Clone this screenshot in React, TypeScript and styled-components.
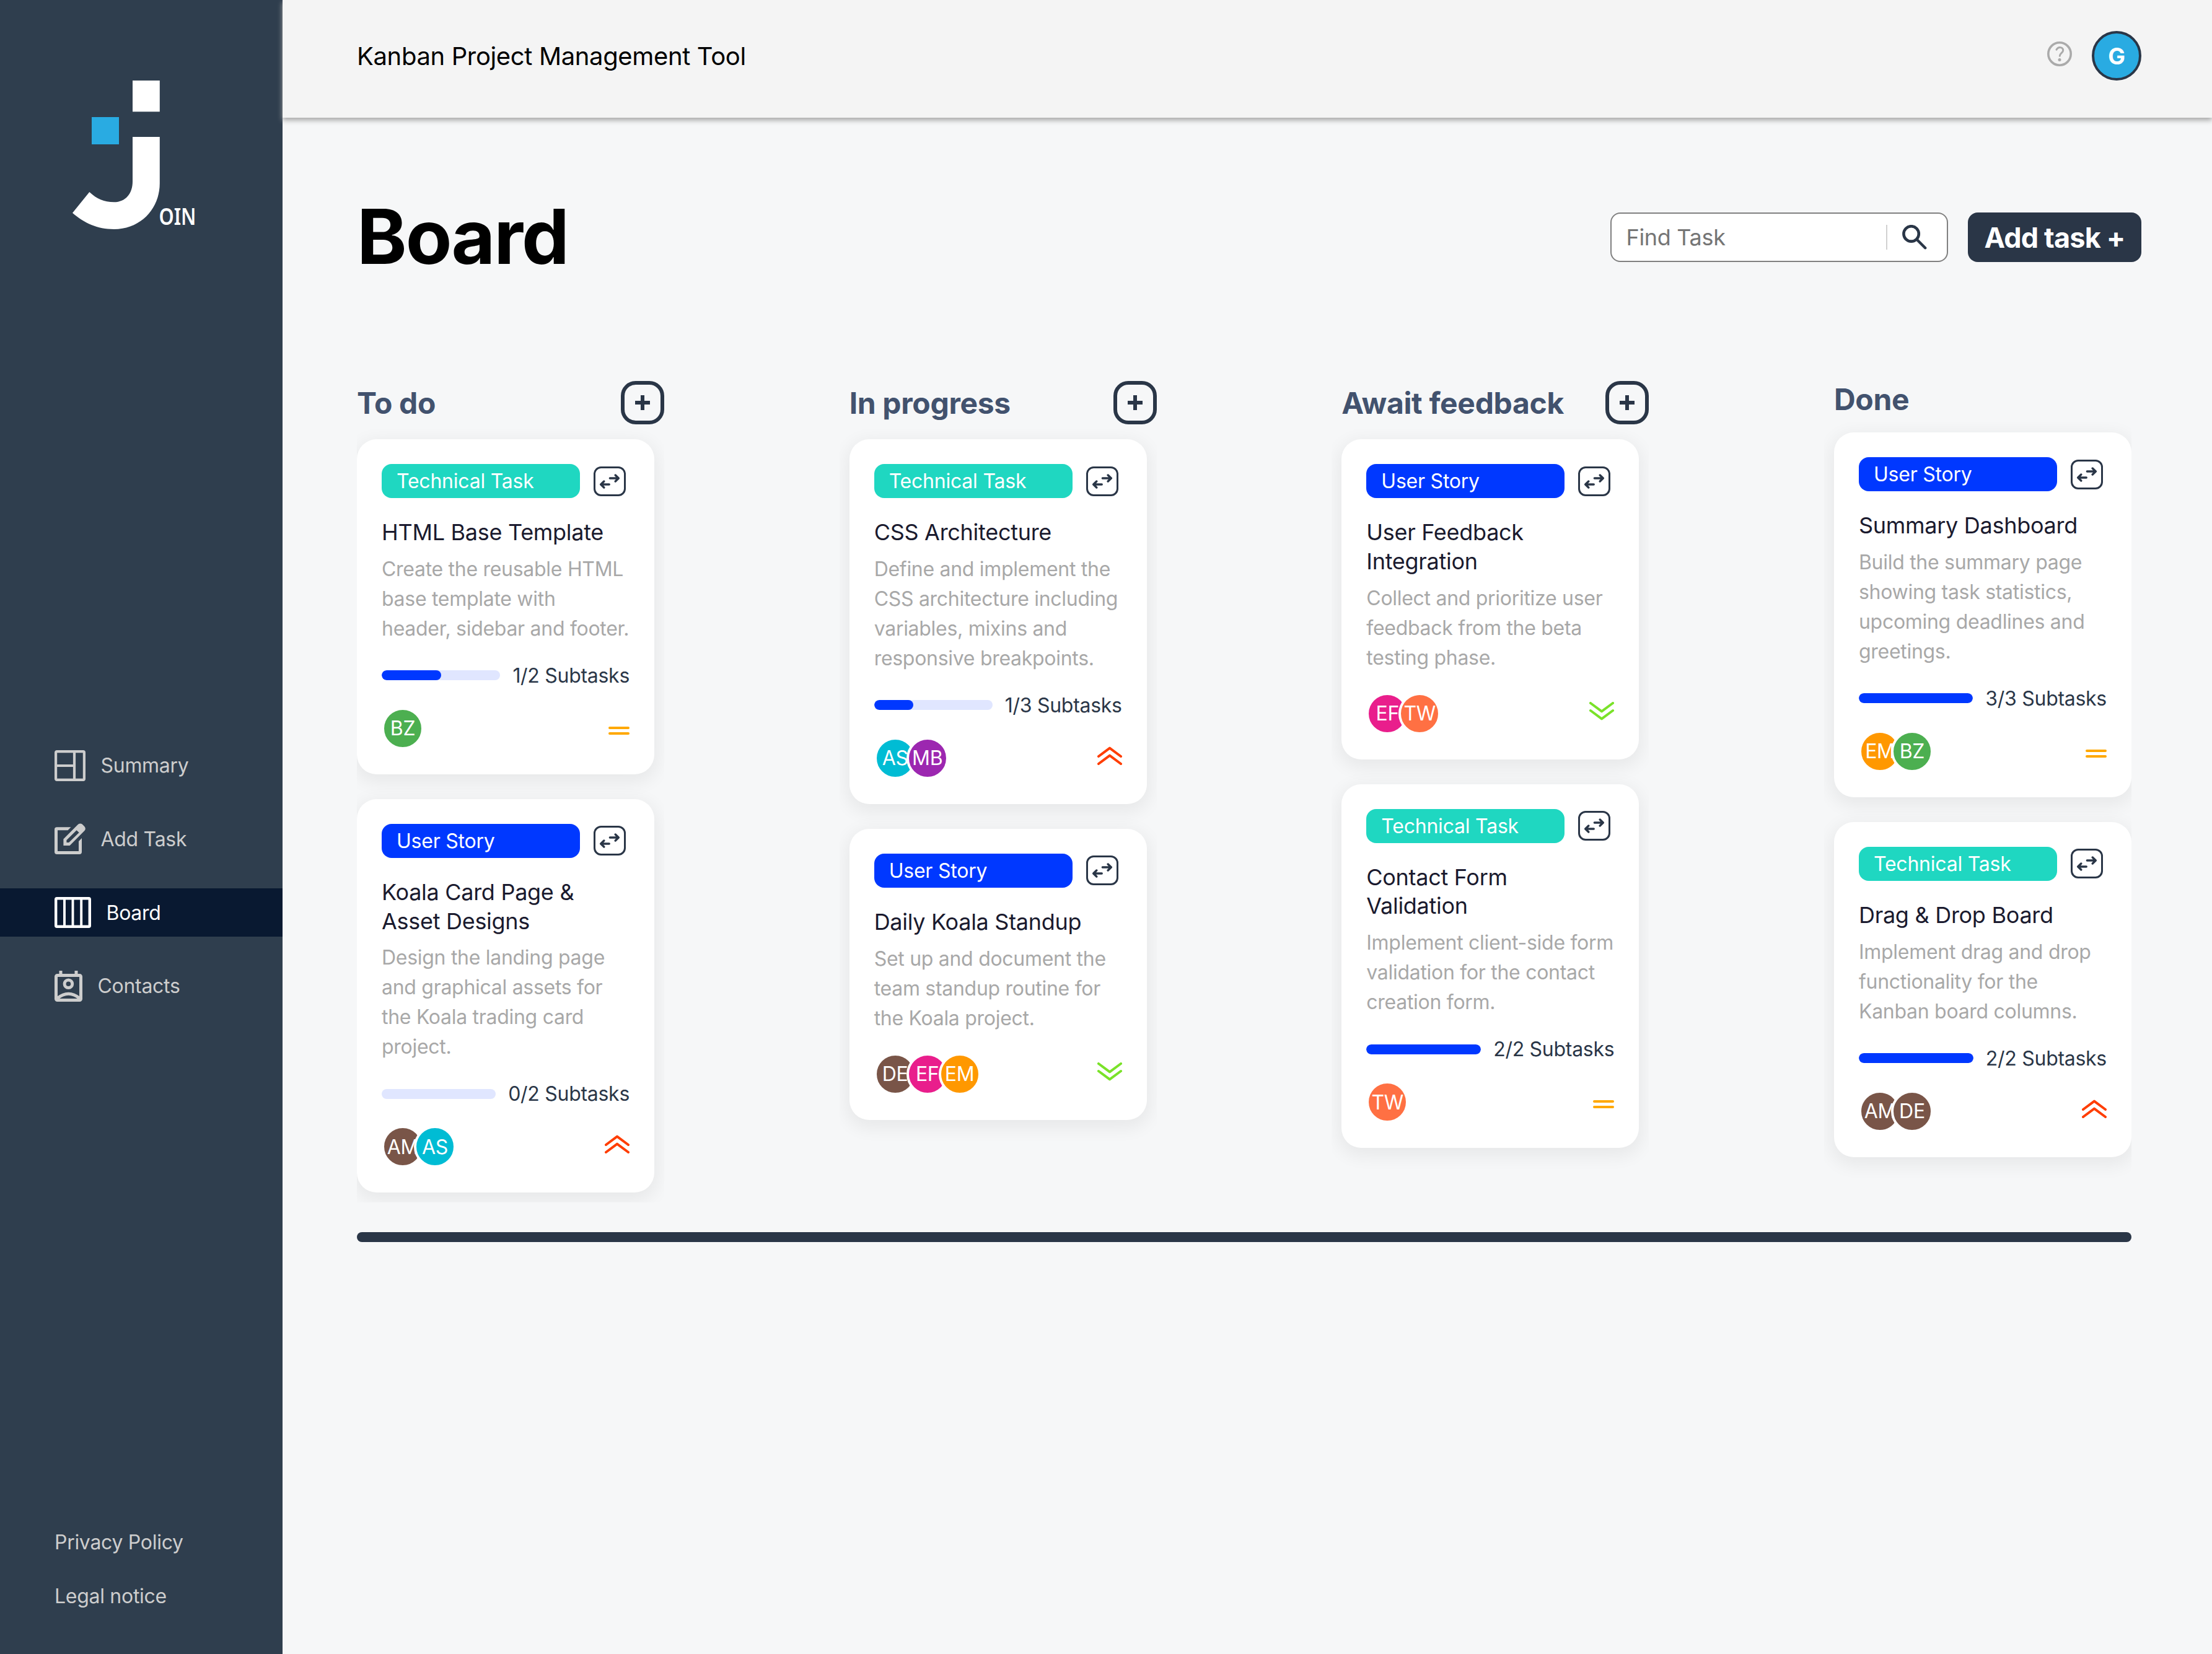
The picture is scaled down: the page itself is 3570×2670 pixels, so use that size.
import * as React from "react";
import styled, { createGlobalStyle } from "styled-components";

type Priority = "low" | "medium" | "urgent";
type Category = "Technical Task" | "User Story";

type Task = {
  category: Category;
  title: string;
  description: string;
  done?: number;
  total?: number;
  users: string[];
  priority: Priority;
};

type ColumnData = {
  title: string;
  canAdd: boolean;
  tasks: Task[];
};

const userColors: { [key: string]: string } = {
  BZ: "#4caf50",
  AM: "#795548",
  AS: "#00bcd4",
  MB: "#9c27b0",
  DE: "#795548",
  EF: "#e91e8c",
  EM: "#ff9800",
  TW: "#ff7043",
};

const columns: ColumnData[] = [
  {
    title: "To do",
    canAdd: true,
    tasks: [
      {
        category: "Technical Task",
        title: "HTML Base Template",
        description:
          "Create the reusable HTML\nbase template with\nheader, sidebar and footer.",
        done: 1,
        total: 2,
        users: ["BZ"],
        priority: "medium",
      },
      {
        category: "User Story",
        title: "Koala Card Page &\nAsset Designs",
        description:
          "Design the landing page\nand graphical assets for\nthe Koala trading card\nproject.",
        done: 0,
        total: 2,
        users: ["AM", "AS"],
        priority: "urgent",
      },
    ],
  },
  {
    title: "In progress",
    canAdd: true,
    tasks: [
      {
        category: "Technical Task",
        title: "CSS Architecture",
        description:
          "Define and implement the\nCSS architecture including\nvariables, mixins and\nresponsive breakpoints.",
        done: 1,
        total: 3,
        users: ["AS", "MB"],
        priority: "urgent",
      },
      {
        category: "User Story",
        title: "Daily Koala Standup",
        description:
          "Set up and document the\nteam standup routine for\nthe Koala project.",
        users: ["DE", "EF", "EM"],
        priority: "low",
      },
    ],
  },
  {
    title: "Await feedback",
    canAdd: true,
    tasks: [
      {
        category: "User Story",
        title: "User Feedback\nIntegration",
        description:
          "Collect and prioritize user\nfeedback from the beta\ntesting phase.",
        users: ["EF", "TW"],
        priority: "low",
      },
      {
        category: "Technical Task",
        title: "Contact Form\nValidation",
        description:
          "Implement client-side form\nvalidation for the contact\ncreation form.",
        done: 2,
        total: 2,
        users: ["TW"],
        priority: "medium",
      },
    ],
  },
  {
    title: "Done",
    canAdd: false,
    tasks: [
      {
        category: "User Story",
        title: "Summary Dashboard",
        description:
          "Build the summary page\nshowing task statistics,\nupcoming deadlines and\ngreetings.",
        done: 3,
        total: 3,
        users: ["EM", "BZ"],
        priority: "medium",
      },
      {
        category: "Technical Task",
        title: "Drag & Drop Board",
        description:
          "Implement drag and drop\nfunctionality for the\nKanban board columns.",
        done: 2,
        total: 2,
        users: ["AM", "DE"],
        priority: "urgent",
      },
    ],
  },
];

//アイコン
const Logo = () => (
  <svg width="226" height="252" viewBox="114 128 226 252">
    <rect x="214" y="130" width="43.8" height="50.3" fill="#fff" />
    <rect x="148" y="189" width="44" height="44" fill="#29abe2" />
    <path
      d="M257.8 221V296C257.8 336 228 370 184 370C157 370 136 360 117 343.8L144.3 310C156 321 168 326.3 184 326.3C203 326.3 214 312 214 293V221Z"
      fill="#fff"
    />
    <LogoText x="256.5" y="363.2" textLength="60" lengthAdjust="spacingAndGlyphs">
      OIN
    </LogoText>
  </svg>
);

const SummaryIcon = () => (
  <svg width="50" height="50" viewBox="0 0 50 50" fill="none" stroke="currentColor" strokeWidth="4.2">
    <rect x="2.1" y="2.1" width="45.8" height="45.8" rx="1.6" />
    <path d="M32 2V48M2 25H32" />
  </svg>
);

const AddTaskIcon = () => (
  <svg width="50" height="50" viewBox="0 0 50 50" fill="currentColor">
    <path d="M26.5 6.3H3.8Q0 6.3 0 10V46.3Q0 50 3.8 50H40.2Q44 50 44 46.3V24L39 29V45H5V11.3H21.5Z" />
    <path
      fillRule="evenodd"
      d="M14.4 36V25.5L38 1.8Q41.5 -1 45 1.8L48.4 5.2Q51.2 8.8 48.4 12L24.6 36ZM19.4 27.2V31H23.2L39.6 15L35.6 11.2Z"
    />
  </svg>
);

const BoardIcon = () => (
  <svg width="59" height="50" viewBox="0 0 59 50" fill="none" stroke="currentColor" strokeWidth="4.4">
    <rect x="2.2" y="2.2" width="54.6" height="45.6" rx="1.6" />
    <path d="M16 2V48M29.5 2V48M43.2 2V48" strokeWidth="3.9" />
  </svg>
);

const ContactsIcon = () => (
  <svg width="45" height="50" viewBox="0 0 45 50" fill="none" stroke="currentColor" strokeWidth="5">
    <rect x="2.5" y="7.5" width="40" height="40" rx="2" />
    <path d="M10 0V6M35 0V6" />
    <circle cx="22.4" cy="21.3" r="6.3" />
    <path d="M4.5 44.5Q22.5 30 40.5 44.5" />
  </svg>
);

const HelpIcon = () => (
  <svg width="40" height="40" viewBox="0 0 40 40" fill="none" stroke="#aaa" strokeLinecap="round">
    <circle cx="20" cy="20" r="18.2" strokeWidth="3.6" />
    <path
      d="M15 13.2C16.2 10.6 18 9.4 20.4 9.4C23.6 9.4 25.7 11.4 25.7 14.3C25.7 18.4 20.3 19 20.3 23.3"
      strokeWidth="3"
    />
    <circle cx="20" cy="29.4" r="2.5" fill="#aaa" stroke="none" />
  </svg>
);

const SearchIcon = () => (
  <svg width="40" height="40" viewBox="0 0 40 40" fill="none" stroke="#2a3647">
    <circle cx="14.6" cy="14.4" r="12.2" strokeWidth="4.6" />
    <path d="M23.5 23.5L37.2 37.2" strokeWidth="4.4" strokeLinecap="round" />
  </svg>
);

const PlusIcon = () => (
  <svg width="24" height="24" viewBox="0 0 24 24" stroke="#2a3647" strokeWidth="6">
    <path d="M12 0V24M0 12H24" />
  </svg>
);

const MoveIcon = () => (
  <svg
    width="36"
    height="28"
    viewBox="0 0 36 28"
    fill="none"
    stroke="#2a3647"
    strokeWidth="3.5"
    strokeLinecap="round"
    strokeLinejoin="round"
  >
    <path d="M18.4 9H32M27.2 4L32.3 9L27.2 14" />
    <path d="M17.2 19H4M8.8 14L3.7 19L8.8 24" />
  </svg>
);

const PriorityIcon: React.FC<{ priority: Priority }> = ({ priority }) => {
  if (priority === "medium") {
    return (
      <svg width="34" height="20" viewBox="0 0 34 20" fill="#ffa800">
        <rect y="7" width="34" height="4" rx="2" />
        <rect y="16" width="34" height="4" rx="2" />
      </svg>
    );
  }
  const isUrgent = priority === "urgent";
  return (
    <svg
      width="40"
      height="38"
      viewBox="0 0 40 38"
      fill="none"
      stroke={isUrgent ? "#ff3d00" : "#7ae229"}
      strokeWidth="4"
      strokeLinecap="round"
      strokeLinejoin="round"
    >
      {isUrgent ? (
        <path d="M2 16L20 2.6L38 16M2 28L20 14.6L38 28" />
      ) : (
        <path d="M2 2L20 15.4L38 2M2 14L20 27.4L38 14" />
      )}
    </svg>
  );
};

const TaskCard: React.FC<{ task: Task }> = ({ task }) => (
  <Card>
    <CardTop>
      <Tag $category={task.category}>{task.category}</Tag>
      <MoveButton>
        <MoveIcon />
      </MoveButton>
    </CardTop>
    <CardTitle>{task.title}</CardTitle>
    <CardDescription>{task.description}</CardDescription>
    {task.total && (
      <Subtasks>
        <Track>
          <Progress style={{ width: `${((task.done || 0) / task.total) * 100}%` }} />
        </Track>
        <span>
          {task.done}/{task.total} Subtasks
        </span>
      </Subtasks>
    )}
    <CardBottom>
      <Users>
        {task.users.map((user) => (
          <UserBadge key={user} $color={userColors[user]}>
            {user}
          </UserBadge>
        ))}
      </Users>
      <PriorityIcon priority={task.priority} />
    </CardBottom>
  </Card>
);

const App: React.FC = () => {
  //状態管理
  const [search, setSearch] = React.useState("");

  //OnChange
  const _handleSearchChange = (e: React.ChangeEvent<HTMLInputElement>) => {
    setSearch(e.target.value);
  };

  //関数
  const _filterTasks = (tasks: Task[]) =>
    tasks.filter((task) =>
      task.title.toLowerCase().includes(search.toLowerCase())
    );

  return (
    <Wrap>
      <GlobalStyle />
      <Sidebar>
        <Logo />
        <Nav>
          <NavItem>
            <SummaryIcon />
            Summary
          </NavItem>
          <NavItem>
            <AddTaskIcon />
            Add Task
          </NavItem>
          <NavItem $active>
            <BoardIcon />
            Board
          </NavItem>
          <NavItem>
            <ContactsIcon />
            Contacts
          </NavItem>
        </Nav>
        <Legal>
          <span>Privacy Policy</span>
          <span>Legal notice</span>
        </Legal>
      </Sidebar>
      <Content>
        <Header>
          <span>Kanban Project Management Tool</span>
          <HeaderRight>
            <HelpIcon />
            <Profile>G</Profile>
          </HeaderRight>
        </Header>
        <Main>
          <TitleRow>
            <Title>Board</Title>
            <Actions>
              <SearchBox>
                <SearchInput
                  placeholder="Find Task"
                  value={search}
                  onChange={_handleSearchChange}
                />
                <Divider />
                <SearchIcon />
              </SearchBox>
              <AddButton>Add task +</AddButton>
            </Actions>
          </TitleRow>
          <Columns>
            {columns.map((column) => (
              <Column key={column.title}>
                <ColumnHeader>
                  <ColumnTitle>{column.title}</ColumnTitle>
                  {column.canAdd && (
                    <PlusButton>
                      <PlusIcon />
                    </PlusButton>
                  )}
                </ColumnHeader>
                <CardList>
                  {_filterTasks(column.tasks).map((task) => (
                    <TaskCard key={task.title} task={task} />
                  ))}
                </CardList>
              </Column>
            ))}
          </Columns>
          <ScrollBar />
        </Main>
      </Content>
    </Wrap>
  );
};

const GlobalStyle = createGlobalStyle`
  * {
    box-sizing: border-box;
  }
  body {
    margin: 0;
    font-family: Inter, "Liberation Sans", sans-serif;
    font-size: 32px;
    background: #f6f7f8;
  }
  svg {
    display: block;
    flex-shrink: 0;
  }
`;

const Wrap = styled.div`
  display: flex;
  height: 2670px;
  overflow: hidden;
`;

const Sidebar = styled.aside`
  display: flex;
  flex-direction: column;
  width: 456px;
  flex-shrink: 0;
  padding-top: 128px;
  letter-spacing: -0.009em;
  background: #2f3e4e;
  color: #cdcdcd;

  > svg {
    margin-left: 114px;
  }
`;

const LogoText = styled.text`
  font-family: "Noto Sans", sans-serif;
  font-size: 38px;
  font-weight: 600;
  letter-spacing: 0;
  fill: #fff;
`;

const Nav = styled.nav`
  display: flex;
  flex-direction: column;
  gap: 40.7px;
  margin-top: 816.8px;
`;

const NavItem = styled.a<{ $active?: boolean }>`
  display: flex;
  align-items: center;
  gap: 24.5px;
  height: 78px;
  padding-left: 88px;
  color: ${(props) => (props.$active ? "#fff" : "#cdcdcd")};
  background: ${(props) => (props.$active ? "#091931" : "transparent")};
`;

const Legal = styled.div`
  display: flex;
  flex-direction: column;
  gap: 48px;
  margin-top: auto;
  padding: 0 0 74px 88px;
  line-height: 39px;
`;

const Content = styled.div`
  flex: 1;
`;

const Header = styled.header`
  position: relative;
  display: flex;
  justify-content: space-between;
  align-items: center;
  height: 190px;
  padding: 0 114px 10px 120px;
  font-size: 40px;
  letter-spacing: -0.009em;
  color: #000;
  background: #f4f4f4;
  box-shadow: 0 4px 8px #a3a3a3;
`;

const HeaderRight = styled.div`
  display: flex;
  align-items: center;
  gap: 32px;

  > svg {
    margin-bottom: 6px;
  }
`;

const Profile = styled.div`
  display: flex;
  justify-content: center;
  align-items: center;
  width: 80px;
  height: 80px;
  border: 4px solid #2a3647;
  border-radius: 50%;
  font-size: 37px;
  font-weight: 700;
  color: #fff;
  background: #29abe2;
`;

const Main = styled.main`
  padding: 119px 114px 0 120px;
`;

const TitleRow = styled.div`
  display: flex;
  justify-content: space-between;
  align-items: center;
  height: 148px;
`;

const Title = styled.h1`
  margin: 0;
  padding-bottom: 3px;
  font-size: 122px;
  font-weight: 700;
  letter-spacing: -0.017em;
  color: #000;
`;

const Actions = styled.div`
  display: flex;
  gap: 32px;
`;

const SearchBox = styled.div`
  display: flex;
  align-items: center;
  width: 545px;
  height: 80px;
  padding: 0 32px 0 23.5px;
  border: 2px solid #808080;
  border-radius: 16px;
  background: #fff;
`;

const SearchInput = styled.input`
  flex: 1;
  min-width: 0;
  padding: 0;
  border: none;
  outline: none;
  font-family: inherit;
  font-size: 36px;
  letter-spacing: -0.009em;
  background: transparent;

  &::placeholder {
    color: #757575;
  }
`;

const Divider = styled.div`
  width: 2px;
  height: 40px;
  margin-right: 24px;
  background: #d1d1d1;
`;

const AddButton = styled.button`
  width: 280px;
  height: 80px;
  padding: 0;
  border: none;
  border-radius: 16px;
  font-family: inherit;
  font-size: 45px;
  font-weight: 700;
  letter-spacing: -0.018em;
  white-space: nowrap;
  color: #fff;
  background: #2a3647;
`;

const Columns = styled.div`
  display: flex;
  justify-content: space-between;
  width: 2864px;
  margin-top: 142px;
  padding-top: 16px;
  overflow: clip;
`;

const Column = styled.section`
  display: flex;
  flex-direction: column;
  width: 480px;
`;

const ColumnHeader = styled.div`
  display: flex;
  justify-content: space-between;
  align-items: center;
  margin: 0 -16px 24px 0;
`;

const ColumnTitle = styled.h2`
  margin: 0;
  font-size: 48px;
  font-weight: 700;
  line-height: 59px;
  letter-spacing: -0.007em;
  color: #42526e;
`;

const PlusButton = styled.div`
  display: flex;
  justify-content: center;
  align-items: center;
  width: 70px;
  height: 70px;
  border: 6px solid #2a3647;
  border-radius: 24px;
`;

const CardList = styled.div`
  display: flex;
  flex: 1;
  flex-direction: column;
  gap: 40px;
  margin: -16px -16px 0;
  padding: 16px;
  letter-spacing: -0.009em;
  overflow: hidden;
`;

const Card = styled.article`
  width: 480px;
  padding: 40px;
  border-radius: 32px;
  background: #fff;
  box-shadow: 0 8px 28px 6px rgba(0, 0, 0, 0.06);
`;

const CardTop = styled.div`
  display: flex;
  align-items: center;
  gap: 22px;
  margin-bottom: 32px;
`;

const Tag = styled.div<{ $category: Category }>`
  width: 320px;
  padding: 8px 24px;
  border-radius: 16px;
  line-height: 39px;
  letter-spacing: -0.007em;
  color: #fff;
  background: ${(props) =>
    props.$category === "User Story" ? "#0038ff" : "#1fd7c1"};
`;

const MoveButton = styled.div`
  display: flex;
  justify-content: center;
  align-items: center;
  width: 52px;
  height: 48px;
  border: 3px solid #2a3647;
  border-radius: 12px;
`;

const CardTitle = styled.h3`
  margin: 0 0 12px;
  font-size: 36px;
  font-weight: 400;
  line-height: 46.8px;
  white-space: pre;
  color: #1a1a2e;
`;

const CardDescription = styled.p`
  margin: 0 0 32px;
  line-height: 48px;
  white-space: pre;
  color: #a8a8a8;
`;

const Subtasks = styled.div`
  display: flex;
  align-items: center;
  gap: 20px;
  margin-bottom: 32px;
  line-height: 39px;
  white-space: nowrap;
  color: #2a3647;
`;

const Track = styled.div`
  flex: 1;
  height: 16px;
  border-radius: 8px;
  overflow: hidden;
  background: #e0e6ff;
`;

const Progress = styled.div`
  height: 100%;
  border-radius: 8px;
  background: #0038ff;
`;

const CardBottom = styled.div`
  display: flex;
  justify-content: space-between;
  align-items: center;
`;

const Users = styled.div`
  display: flex;
`;

const UserBadge = styled.div<{ $color: string }>`
  display: flex;
  justify-content: center;
  align-items: center;
  width: 68px;
  height: 68px;
  border: 4px solid #fff;
  border-radius: 50%;
  color: #fff;
  background: ${(props) => props.$color};

  & + & {
    margin-left: -16px;
  }
`;

const ScrollBar = styled.div`
  width: 2864px;
  height: 16px;
  margin-top: 48px;
  border-radius: 8px;
  background: #2a3647;
`;

export default App;
